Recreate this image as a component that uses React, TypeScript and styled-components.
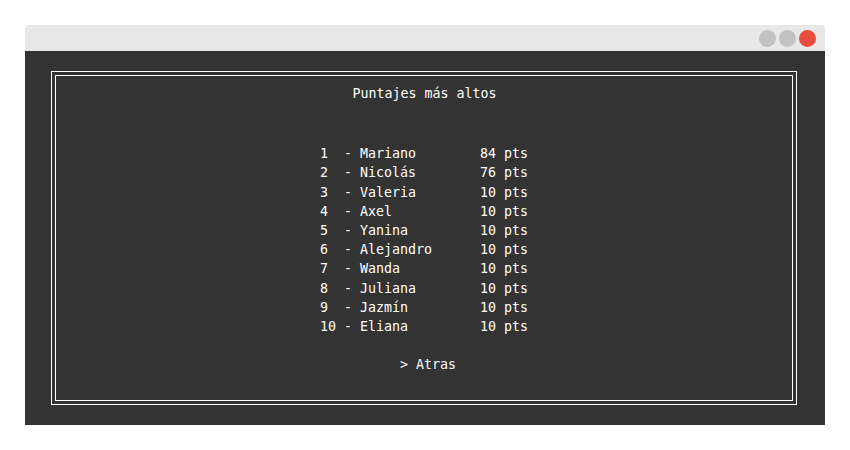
import React from "react";
import styled, { createGlobalStyle } from "styled-components";

const GlobalStyle = createGlobalStyle`
  html, body {
    margin: 0;
    padding: 0;
    background: #ffffff;
  }
`;

const Page = styled.div`
  padding: 25px;
`;

const Window = styled.div`
  width: 800px;
  height: 400px;
  display: flex;
  flex-direction: column;
  border-radius: 4px 4px 0 0;
  overflow: hidden;
`;

const TitleBar = styled.div`
  height: 26px;
  background: #e8e8e8;
  display: flex;
  align-items: center;
  justify-content: flex-end;
  gap: 3px;
  padding-right: 9px;
  box-sizing: border-box;
`;

const Dot = styled.span<{ $red?: boolean }>`
  width: 17px;
  height: 17px;
  border-radius: 50%;
  background: ${(p) => (p.$red ? "#e74c3c" : "#c2c2c2")};
`;

const Screen = styled.div`
  flex: 1;
  background: #333333;
  padding: 20px 28px 20px 26px;
  box-sizing: border-box;
  display: flex;
`;

const OuterFrame = styled.div`
  flex: 1;
  border: 1px solid #ffffff;
  padding: 3px;
  display: flex;
`;

const InnerFrame = styled.div`
  flex: 1;
  border: 1px solid #ffffff;
  display: flex;
  flex-direction: column;
  align-items: center;
  padding-top: 8px;
  font-family: "DejaVu Sans Mono", "Liberation Mono", monospace;
  font-size: 13.3px;
  line-height: 19.2px;
  color: #ffffff;
  white-space: pre;
`;

const Heading = styled.div`
  margin-left: 1px;
`;

const ScoreList = styled.div`
  margin-top: 41px;
  display: flex;
  flex-direction: column;
`;

const Row = styled.div``;

const BackOption = styled.div`
  margin-top: 19px;
  margin-left: 8px;
`;

const scores = [
  ["Mariano", 84],
  ["Nicolás", 76],
  ["Valeria", 10],
  ["Axel", 10],
  ["Yanina", 10],
  ["Alejandro", 10],
  ["Wanda", 10],
  ["Juliana", 10],
  ["Jazmín", 10],
  ["Eliana", 10],
] as const;

export default function App() {
  return (
    <Page>
      <GlobalStyle />
      <Window>
        <TitleBar>
          <Dot />
          <Dot />
          <Dot $red />
        </TitleBar>
        <Screen>
          <OuterFrame>
            <InnerFrame>
              <Heading>Puntajes más altos</Heading>
              <ScoreList>
                {scores.map(([name, pts], i) => (
                  <Row key={name}>
                    {`${String(i + 1).padEnd(2, " ")} - ${name.padEnd(15, " ")}${pts} pts`}
                  </Row>
                ))}
              </ScoreList>
              <BackOption>{"> Atras"}</BackOption>
            </InnerFrame>
          </OuterFrame>
        </Screen>
      </Window>
    </Page>
  );
}
